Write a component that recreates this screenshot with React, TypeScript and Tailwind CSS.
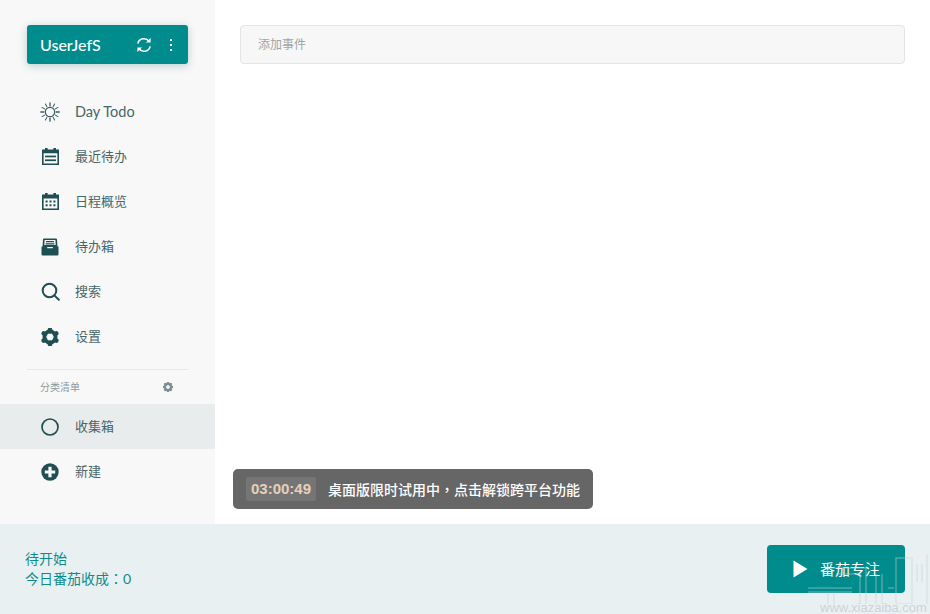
import React from 'react'

const stack = "font-['Lato','Noto_Sans_CJK_SC',sans-serif]"
const ink = '#1f4e53'

function SunIcon() {
  const rays = [0, 30, 60, 90, 120, 150, 180, 210, 240, 270, 300, 330]
  return (
    <svg width="20" height="20" viewBox="0 0 20 20" fill="none" stroke="#3a5c60" strokeWidth="1.2" strokeLinecap="round">
      <circle cx="10" cy="10" r="4.7" />
      {rays.map((a) => (
        <path key={a} d="M10 0.8v3" transform={`rotate(${a} 10 10)`} strokeWidth={a % 90 === 0 ? 1.3 : 1} />
      ))}
    </svg>
  )
}

function TodoIcon() {
  return (
    <svg width="17" height="17" viewBox="0 0 17 17">
      <path fill={ink} fillRule="evenodd" d="M3 0h2.6v1.5h5.8V0H14v1.5h3V17H0V1.5h3zM1.6 5.2v10.2h13.8V5.2z" />
      <rect x="3" y="7.6" width="11" height="1.7" fill={ink} />
      <rect x="3" y="11.4" width="11" height="1.7" fill={ink} />
    </svg>
  )
}

function CalendarIcon() {
  return (
    <svg width="17" height="17" viewBox="0 0 17 17">
      <path fill={ink} fillRule="evenodd" d="M3 0h2.6v1.5h5.8V0H14v1.5h3V17H0V1.5h3zM1.6 5.6v9.8h13.8V5.6z" />
      <path fill={ink} d="M3.6 7.6h2v2h-2zM7.5 7.6h2v2h-2zM11.4 7.6h2v2h-2zM3.6 11.2h2v2h-2zM7.5 11.2h2v2h-2zM11.4 11.2h2v2h-2z" />
    </svg>
  )
}

function InboxIcon() {
  return (
    <svg width="18" height="18" viewBox="0 0 18 18">
      <path fill={ink} fillRule="evenodd" d="M3 0.5h12a1 1 0 0 1 1 1L16.5 9h-15L2 1.5a1 1 0 0 1 1-1zM3.6 2l-.3 5h11.4l-.3-5z" />
      <path fill={ink} d="M5 3h8v1.3H5zM4.6 5.2h8.8v1.3H4.6z" />
      <path fill={ink} d="M0.5 8.5h5.7v1.8h5.6V8.5h5.7v7.8a1.2 1.2 0 0 1-1.2 1.2H1.7a1.2 1.2 0 0 1-1.2-1.2z" />
    </svg>
  )
}

function SearchIcon() {
  return (
    <svg width="19" height="19" viewBox="0 0 19 19" fill="none" stroke={ink} strokeWidth="2">
      <circle cx="8.5" cy="8.5" r="6.8" />
      <path d="M13.6 13.6l4.2 4.2" strokeLinecap="round" />
    </svg>
  )
}

function GearIcon({ size = 18, color = ink, teeth = 6 }: { size?: number; color?: string; teeth?: number }) {
  const angles = Array.from({ length: teeth }, (_, i) => (360 / teeth) * i)
  return (
    <svg width={size} height={size} viewBox="0 0 18 18" fill="none">
      <circle cx="9" cy="9" r="5.6" stroke={color} strokeWidth="3.8" />
      {angles.map((a) => (
        <path key={a} d="M9 1.8v1.6" stroke={color} strokeWidth="4.6" strokeLinecap="round" transform={`rotate(${a} 9 9)`} />
      ))}
    </svg>
  )
}

function CircleIcon() {
  return (
    <svg width="18" height="18" viewBox="0 0 18 18" fill="none" stroke={ink} strokeWidth="1.7">
      <circle cx="9" cy="9" r="8" />
    </svg>
  )
}

function PlusIcon() {
  return (
    <svg width="18" height="18" viewBox="0 0 18 18">
      <circle cx="9" cy="9" r="8.7" fill={ink} />
      <path d="M7.4 3.8h3.2v3.6h3.6v3.2h-3.6v3.6H7.4v-3.6H3.8V7.4h3.6z" fill="#f8f8f8" />
    </svg>
  )
}

function SyncIcon() {
  return (
    <svg width="16" height="16" viewBox="0 0 16 16" fill="none" stroke="#fff" strokeWidth="1.5">
      <path d="M1.8 6.6A6.3 6.3 0 0 1 13 4.2" />
      <path d="M14.2 9.4A6.3 6.3 0 0 1 3 11.8" />
      <path d="M14.6 1v4.6H10z" fill="#fff" stroke="none" />
      <path d="M1.4 15v-4.6H6z" fill="#fff" stroke="none" />
    </svg>
  )
}

const menu = [
  { label: 'Day Todo', icon: <SunIcon />, latin: true },
  { label: '最近待办', icon: <TodoIcon /> },
  { label: '日程概览', icon: <CalendarIcon /> },
  { label: '待办箱', icon: <InboxIcon /> },
  { label: '搜索', icon: <SearchIcon /> },
  { label: '设置', icon: <GearIcon /> },
]

function NavRow({ label, icon, active, latin }: { label: string; icon: React.ReactNode; active?: boolean; latin?: boolean }) {
  return (
    <div className={`flex h-[45px] items-center pl-[40px] ${active ? 'bg-[#e9ecec]' : ''}`}>
      <div className="flex w-[35px] shrink-0 items-center">
        <div className="flex w-[20px] items-center justify-center">{icon}</div>
      </div>
      <span className={`${latin ? 'text-[14.5px]' : 'text-[13px]'} text-[#47666a]`}>{label}</span>
    </div>
  )
}

export default function App() {
  return (
    <div className={`relative flex h-[614px] w-[930px] flex-col overflow-hidden bg-white ${stack}`}>
      <div className="flex h-[524px] shrink-0">
        <aside className="w-[215px] shrink-0 bg-[#f8f8f8] pt-[25px]">
          <div className="mx-[27px] flex h-[39px] w-[161px] items-center rounded-[3px] bg-[#008c8c] pl-[13px] pr-[16px] shadow-[0_2px_8px_rgba(0,90,90,0.25)]">
            <span className="flex-1 text-[16px] font-medium text-white">UserJefS</span>
            <SyncIcon />
            <div className="ml-[18px] flex flex-col gap-[3px]">
              <span className="h-[2px] w-[2px] bg-white" />
              <span className="h-[2px] w-[2px] bg-white" />
              <span className="h-[2px] w-[2px] bg-white" />
            </div>
          </div>
          <nav className="mt-[25px]">
            {menu.map((m) => (
              <NavRow key={m.label} label={m.label} icon={m.icon} latin={m.latin} />
            ))}
          </nav>
          <div className="mx-[27px] mt-[10px] h-px w-[161px] bg-[#e8e8e8]" />
          <div className="flex h-[34px] items-center justify-between pl-[40px] pr-[42px]">
            <span className="text-[10px] text-[#8a9a9c]">分类清单</span>
            <GearIcon size={10} color="#7d9194" teeth={8} />
          </div>
          <NavRow label="收集箱" icon={<CircleIcon />} active />
          <NavRow label="新建" icon={<PlusIcon />} />
        </aside>
        <main className="flex-1 pl-[25px] pr-[25px] pt-[25px]">
          <div className="flex h-[39px] items-center rounded-[4px] border border-[#e4e4e4] bg-[#f7f7f7] pl-[17px] text-[12px] text-[#a3a3a3]">
            添加事件
          </div>
        </main>
      </div>

      <footer className="flex flex-1 items-center justify-between bg-[#e9f0f2] pl-[25px] pr-[25px]">
        <div className="text-[14px] leading-[20px] text-[#0d8c8c]">
          <div>待开始</div>
          <div className="-mt-px">
            今日番茄收成<span className="font-['Noto_Sans_CJK_TC',sans-serif]">：</span>0
          </div>
        </div>
        <button className="flex h-[48px] w-[138px] items-center rounded-[4px] bg-[#008c8c] pl-[26px] text-[15px] text-white">
          <svg width="15" height="18" viewBox="0 0 15 18" className="mr-[12px]">
            <path d="M0.5 0.5L14.5 9 0.5 17.5z" fill="#fff" />
          </svg>
          番茄专注
        </button>
      </footer>

      <div className="absolute left-[233px] top-[469px] flex h-[40px] w-[360px] items-center rounded-[5px] bg-[#666666] pl-[13px]">
        <span className="flex h-[24px] w-[70px] items-center justify-center rounded-[2px] bg-[#757575] font-['Liberation_Sans',sans-serif] text-[15px] font-bold text-[#e8cfb8]">
          03:00:49
        </span>
        <span className="ml-[12px] text-[14px] font-medium text-white">
          桌面版限时试用中<span className="font-['Noto_Sans_CJK_TC',sans-serif]">，</span>点击解锁跨平台功能
        </span>
      </div>

      {/* site watermark over the bottom right corner */}
      <svg width="124" height="74" viewBox="0 0 124 74" fill="none" className="absolute left-[806px] top-[530px]" stroke="#c5cfd1" strokeOpacity="0.4" strokeWidth="1.5">
        <path d="M2 58h44M2 62h44M22 62v12M28 62v12" />
        <path d="M24 38h36v36M30 44h24v30" />
        <path d="M70 44v30M76 44v30M82 58h6" />
        <path d="M90 28h16v46H90z" />
        <path d="M111 34v18M116 34v18M121 24v50" />
      </svg>
      <span className="absolute left-[820px] top-[602px] font-['Liberation_Sans',sans-serif] text-[13px] leading-[12px] text-[#ccd4d6]">
        www.xiazaiba.com
      </span>
    </div>
  )
}
